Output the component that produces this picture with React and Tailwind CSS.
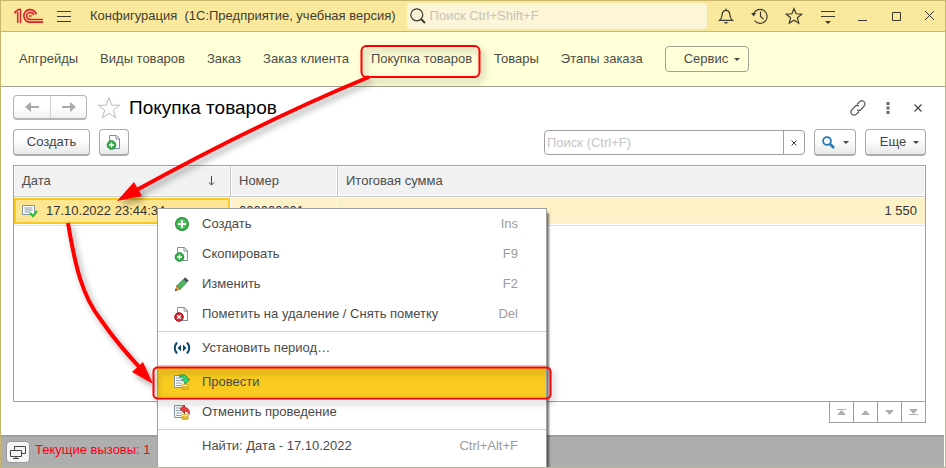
import React from "react";

const navItems = ["Апгрейды", "Виды товаров", "Заказ", "Заказ клиента", "Покупка товаров", "Товары", "Этапы заказа"];

function Caret() {
  return (
    <svg width="6" height="3" viewBox="0 0 6 3" className="shrink-0" aria-hidden="true">
      <path d="M0 0h6L3 3z" fill="#444" />
    </svg>
  );
}

function Logo() {
  return (
    <svg width="30" height="16" viewBox="0 0 30 16" fill="none" stroke="#d9232a" className="shrink-0" aria-label="1С">
      <path d="M0 4.500h2.500M3.700 15V4M1 3.800L4.500 1.600h2V15" strokeWidth="1.500" />
      <path d="M22.300 6.500A6.300 6.300 0 1 0 16.200 14.200H29" strokeWidth="1.700" />
      <path d="M19.600 7.200A3.500 3.500 0 1 0 16.200 11.400H29" strokeWidth="1.500" />
      <circle cx="16.300" cy="7.900" r="1" strokeWidth="1" />
    </svg>
  );
}

function DocPlus() {
  return (
    <svg width="16" height="16" viewBox="0 0 16 16" fill="none" aria-hidden="true">
      <path d="M3.500 1.500h7l3 3v10h-10z" fill="#fff" stroke="#7c8ea3" />
      <path d="M10 1.500v3.500h3.500" stroke="#7c8ea3" />
      <circle cx="5.500" cy="11" r="4.300" fill="#35ab48" stroke="#1f8a34" />
      <path d="M5.500 8.500v5M3 11h5" stroke="#fff" strokeWidth="1.400" />
    </svg>
  );
}

function DocDelete() {
  return (
    <svg width="16" height="16" viewBox="0 0 16 16" fill="none" aria-hidden="true">
      <path d="M3.500 1.500h7l3 3v10h-10z" fill="#fff" stroke="#7c8ea3" />
      <path d="M10 1.500v3.500h3.500" stroke="#7c8ea3" />
      <circle cx="5" cy="11" r="4.300" fill="#d3262c" stroke="#a9151c" />
      <path d="M3.200 9.200l3.600 3.600M6.800 9.200l-3.600 3.600" stroke="#fff" strokeWidth="1.400" />
    </svg>
  );
}

function PlusCircle() {
  return (
    <svg width="16" height="16" viewBox="0 0 16 16" aria-hidden="true">
      <circle cx="8" cy="8" r="6.400" fill="#48bb55" stroke="#249038" strokeWidth="1.200" />
      <path d="M8 4v8M4 8h8" stroke="#fff" strokeWidth="2" />
    </svg>
  );
}

function Pencil() {
  return (
    <svg width="16" height="16" viewBox="0 0 16 16" aria-hidden="true">
      <path d="M1.200 14.800l1.600-5 3.400 3.400z" fill="#e8a552" stroke="#8c5a20" strokeWidth=".6" />
      <path d="M1.200 14.800l.6-2 1.400 1.400z" fill="#4a2c12" />
      <path d="M2.800 9.800l6.400-6.400 3.400 3.400-6.400 6.400z" fill="#4fb45e" stroke="#26803a" strokeWidth=".7" />
      <path d="M9.400 3.200l1.900-1.900 3.400 3.400-1.900 1.900z" fill="#3c4d61" />
    </svg>
  );
}

function Period() {
  return (
    <svg width="18" height="16" viewBox="0 0 18 16" fill="none" aria-hidden="true">
      <path d="M4 2.500Q-.5 8 4 13.500M14 2.500Q18.500 8 14 13.500" stroke="#124a6e" strokeWidth="2" />
      <path d="M8 4.500v7L4.500 8zM10 4.500v7L13.500 8z" fill="#124a6e" />
    </svg>
  );
}

function PostIcon({ undo = false }) {
  return (
    <svg width="18" height="18" viewBox="0 0 18 18" aria-hidden="true">
      <path d="M1.500 2.500h10v12h-10z" fill="#f6f8fa" stroke="#8293a5" />
      <path d="M3 5h6M3 7.500h6M3 10h6M3 12.500h5" stroke="#94a2b2" />
      <ellipse cx="12" cy="15" rx="3.500" ry="1.600" fill="#f2c72e" stroke="#b98c13" strokeWidth=".7" />
      <ellipse cx="12" cy="12.600" rx="3.500" ry="1.600" fill="#ffe56a" stroke="#b98c13" strokeWidth=".7" />
      {undo ? (
        <path d="M7 6l4.500-4v2.500c4 0 5.500 3 4.700 7-1-2.500-2.300-3.400-4.700-3.300v2.300z" fill="#ea4040" stroke="#a81f22" strokeWidth=".7" />
      ) : (
        <path d="M6.500 2.200c5-1.300 8 .5 8.200 4H17l-4.200 4.500L8.500 6.300h2.600c0-1.900-1.500-2.800-4.600-2.200z" fill="#2fd873" stroke="#128a43" strokeWidth=".7" />
      )}
    </svg>
  );
}

function TitleBarButton({ label, children, last = false }) {
  return (
    <button type="button" aria-label={label} className={`flex h-full items-center justify-center ${last ? "w-8" : "w-[34px]"}`}>
      <svg width="18" height="18" viewBox="0 0 18 18" fill="none" stroke="#3b3a30" strokeWidth="1.200" aria-hidden="true">
        {children}
      </svg>
    </button>
  );
}

function TitleBar() {
  return (
    <header className="flex h-[31px] shrink-0 items-center border-b border-[#c8b66c] bg-[#fae99c]">
      <div className="flex shrink-0 items-center gap-3 pl-[13px]">
        <Logo />
        <button type="button" aria-label="Главное меню" className="flex w-4 flex-col gap-1 px-px">
          <span className="h-px w-full bg-[#3b3a30]" />
          <span className="h-px w-full bg-[#3b3a30]" />
          <span className="h-px w-full bg-[#3b3a30]" />
        </button>
      </div>
      <h1 className="ml-[18px] shrink-0 whitespace-pre text-[13px] text-[#3f3d33]">Конфигурация  (1С:Предприятие, учебная версия)</h1>
      <label className="ml-[11px] flex h-[26px] min-w-0 flex-1 items-center gap-1 rounded-sm bg-[#fcf5d8] pl-[3px]">
        <svg width="16" height="16" viewBox="0 0 16 16" fill="none" stroke="#3b3a30" aria-hidden="true">
          <circle cx="6.800" cy="6.800" r="6" strokeWidth="1.200" />
          <path d="M11 11l4 4" strokeWidth="2" />
        </svg>
        <input aria-label="Поиск" placeholder="Поиск Ctrl+Shift+F" className="min-w-0 flex-1 bg-transparent text-[13px] outline-none placeholder:text-[#c6c3b8]" />
      </label>
      <div className="ml-0.5 flex h-full shrink-0">
        <TitleBarButton label="Уведомления">
          <path d="M9 1.500v1.500M2.500 13.400h13c-2.500-2-2.500-3.400-2.700-6C12.600 4.600 11 3.300 9 3.300S5.400 4.600 5.200 7.400c-.2 2.600-.2 4-2.700 6z" />
          <path d="M7 15h4l-1 1.500H8z" fill="#3b3a30" stroke="none" />
        </TitleBarButton>
        <TitleBarButton label="История">
          <path d="M2.700 6.500A7 7 0 1 1 3.500 13.500M9.500 4.500v5l3 2.500" />
          <path d="M.2 6h5L2.500 9.500z" fill="#3b3a30" stroke="none" />
        </TitleBarButton>
        <TitleBarButton label="Избранное">
          <path d="M9 1.600l2.100 5.200 5.600.4-4.300 3.600 1.400 5.500L9 13.300l-4.800 3 1.400-5.500-4.300-3.600 5.600-.4z" />
        </TitleBarButton>
        <TitleBarButton label="Настройки">
          <path d="M2 4.500h14M2 9.500h14" />
          <path d="M6 14h6l-3 3z" fill="#3b3a30" stroke="none" />
        </TitleBarButton>
        <TitleBarButton label="Свернуть">
          <path d="M5 13.500h9" strokeWidth="1" />
        </TitleBarButton>
        <TitleBarButton label="Развернуть">
          <path d="M5.500 5.500h8v8h-8z" strokeWidth="1" />
        </TitleBarButton>
        <TitleBarButton label="Закрыть" last>
          <path d="M5 4l9 9M14 4l-9 9" strokeWidth="1" />
        </TitleBarButton>
      </div>
    </header>
  );
}

function SectionNav() {
  return (
    <nav className="flex h-[55px] shrink-0 items-center gap-[22px] border-b border-[#a3a38f] bg-[#ffffd8] pl-[18px] text-[13px] text-[#4d4d48]">
      {navItems.map((item) => (
        <a key={item} href="#" className="whitespace-nowrap">{item}</a>
      ))}
      <button type="button" className="flex h-[26px] items-center gap-1.5 rounded border border-[#a3a38f] pr-2 pl-[18px]">
        Сервис
        <Caret />
      </button>
    </nav>
  );
}

const raised = "flex h-[27px] items-center justify-center rounded-sm border border-b-2 border-[#aaa] bg-linear-to-b from-white from-40% to-[#e8e8e8]";

function FormHeader() {
  return (
    <div className="flex h-[25px] items-center">
      <div className="flex h-[25px] rounded-sm border border-b-2 border-[#b4b4b4] bg-linear-to-b from-white from-50% to-[#f0f0f0]">
        <button type="button" aria-label="Назад" className="flex w-9 items-center justify-center">
          <svg width="14" height="10" viewBox="0 0 14 10" aria-hidden="true"><path d="M0 5l6-5v4h8v2H6v4z" fill="#aaa" /></svg>
        </button>
        <button type="button" aria-label="Вперед" className="flex w-9 items-center justify-center border-l border-[#d2d2d2]">
          <svg width="14" height="10" viewBox="0 0 14 10" aria-hidden="true"><path d="M14 5L8 0v4H0v2h8v4z" fill="#aaa" /></svg>
        </button>
      </div>
      <button type="button" aria-label="Добавить в избранное" className="ml-2.5">
        <svg width="24" height="24" viewBox="0 0 24 24" fill="none" stroke="#b5bbc1" aria-hidden="true">
          <path d="M12 1.500l2.700 7.700h8l-6.400 4.900 2.400 7.800L12 17.200l-6.700 4.700 2.400-7.800L1.300 9.200h8z" />
        </svg>
      </button>
      <h2 className="ml-2 text-[19px] leading-6 text-black">Покупка товаров</h2>
      <div className="ml-auto flex items-center gap-2.5">
        <button type="button" aria-label="Ссылка">
          <svg width="16" height="16" viewBox="0 0 16 16" fill="none" stroke="#555" strokeWidth="1.200" aria-hidden="true">
            <path d="M7 4.500l2.500-2.700a3 3 0 0 1 4.600 4.300L11 9.500c-1.200 1.200-2.700 1.200-3.800.4" />
            <path d="M9 11.500l-2.500 2.700A3 3 0 0 1 1.900 9.900L5 6.500c1.200-1.200 2.700-1.200 3.800-.4" />
          </svg>
        </button>
        <button type="button" aria-label="Меню формы" className="flex w-6 justify-center">
          <svg width="4" height="12" viewBox="0 0 4 12" fill="#666" aria-hidden="true"><path d="M.5 0h3v3h-3zM.5 4.500h3v3h-3zM.5 9h3v3h-3z" /></svg>
        </button>
        <button type="button" aria-label="Закрыть форму" className="flex w-4 justify-center">
          <svg width="8" height="8" viewBox="0 0 8 8" stroke="#444" strokeWidth="1.200" aria-hidden="true"><path d="M.5.5l7 7M7.500.5l-7 7" /></svg>
        </button>
      </div>
    </div>
  );
}

function Toolbar() {
  return (
    <div className="mt-[9px] flex items-center text-[13px] text-[#444]">
      <button type="button" className={`${raised} w-[77px]`}>Создать</button>
      <button type="button" aria-label="Создать копированием" className={`${raised} ml-[9px] w-[30px]`}><DocPlus /></button>
      <div className="ml-auto flex h-[25px] w-[261px] rounded-sm border border-[#a0a0a0] bg-white">
        <input aria-label="Поиск по списку" placeholder="Поиск (Ctrl+F)" className="min-w-0 flex-1 px-0.5 outline-none placeholder:text-[#c4c4c4]" />
        <button type="button" aria-label="Очистить" className="flex w-[21px] items-center justify-center border-l border-[#a0a0a0]">
          <svg width="6" height="6" viewBox="0 0 6 6" stroke="#444" aria-hidden="true"><path d="M.5.5l5 5M5.500.5l-5 5" /></svg>
        </button>
      </div>
      <button type="button" aria-label="Найти" className={`${raised} ml-[9px] w-[42px] gap-2`}>
        <svg width="13" height="13" viewBox="0 0 13 13" fill="none" stroke="#2678b2" aria-hidden="true">
          <circle cx="5" cy="5" r="3.900" strokeWidth="1.800" />
          <path d="M8 8l4 4" strokeWidth="2.600" />
        </svg>
        <Caret />
      </button>
      <button type="button" className={`${raised} ml-[9px] w-[61px] gap-[7px] pl-2`}>Еще<Caret /></button>
    </div>
  );
}

function List() {
  return (
    <div className="mt-[9px] flex-1 border border-[#a0a0a0] bg-white">
      <table className="w-full table-fixed border-separate border-spacing-0 text-left text-[13px]">
        <colgroup>
          <col className="w-[217px]" />
          <col className="w-[107px]" />
          <col />
        </colgroup>
        <thead className="text-[#4d4d4d]">
          <tr>
            <th className="border-r border-b border-[#c6c6c6] p-px font-normal">
              <div className="flex h-7 items-center justify-between bg-[#f1f1f1] pr-3.5 pl-[7px]">
                Дата
                <svg width="7" height="10" viewBox="0 0 7 10" fill="none" stroke="#444" aria-hidden="true"><path d="M3.500 0v9M1 6.500l2.500 2.500L6 6.500" /></svg>
              </div>
            </th>
            <th className="border-r border-b border-[#c6c6c6] p-px font-normal">
              <div className="flex h-7 items-center bg-[#f1f1f1] pl-[7px]">Номер</div>
            </th>
            <th className="border-b border-[#c6c6c6] p-px font-normal">
              <div className="flex h-7 items-center bg-[#f1f1f1] pl-[7px]">Итоговая сумма</div>
            </th>
          </tr>
        </thead>
        <tbody className="text-[#333]">
          <tr>
            <td className="border-b border-[#e0e0e0] py-px pr-px">
              <div className="flex h-[26px] items-center gap-2 border-2 border-[#f9c922] bg-[#fde591] pl-1.5">
                <svg width="16" height="14" viewBox="0 0 16 14" fill="none" aria-hidden="true">
                  <path d="M.5 1.500h12v9H.5z" fill="#fff" stroke="#8293a5" />
                  <path d="M2.500 4h8M2.500 6h8M2.500 8h6" stroke="#8293a5" />
                  <path d="M8 9l3 3 4-5" stroke="#2fbb3c" strokeWidth="2.200" />
                </svg>
                <span className="whitespace-nowrap">17.10.2022 23:44:34</span>
              </div>
            </td>
            <td className="border-b border-[#e0e0e0] py-px pr-px">
              <div className="flex h-[26px] items-center bg-[#fdf1c7] pl-2">000000001</div>
            </td>
            <td className="border-b border-[#e0e0e0] py-px">
              <div className="flex h-[26px] items-center justify-end bg-[#fdf1c7] pr-2">1 550</div>
            </td>
          </tr>
        </tbody>
      </table>
    </div>
  );
}

const pagerIcons = [
  ["В начало", "M0 0h9v1H0zM4.500 1L9 6H0z"],
  ["Вверх", "M4.500 1L9 6H0z"],
  ["Вниз", "M0 1h9L4.500 6z"],
  ["В конец", "M0 0h9L4.500 5zM0 5h9v1H0z"],
];

function Pager() {
  return (
    <div className="mb-3 flex justify-end">
      <div className="flex h-[21px] divide-x divide-[#a0a0a0] border border-t-0 border-[#a0a0a0]">
        {pagerIcons.map(([label, d]) => (
          <button key={label} type="button" aria-label={label} className="box-content flex w-[23px] items-center justify-center">
            <svg width="9" height="6" viewBox="0 0 9 6" fill="#adadad" aria-hidden="true"><path d={d} /></svg>
          </button>
        ))}
      </div>
    </div>
  );
}

function StatusBar() {
  return (
    <footer className="mr-px flex h-8 shrink-0 items-center gap-[5px] border-t-2 border-[#9d9d9d] bg-[#aeaeae] pl-[5px] text-[13px] text-[#ff0014]">
      <button type="button" aria-label="Окна" className="flex h-[22px] w-6 items-center justify-center rounded-sm border border-[#999] bg-[#f5f5f5]">
        <svg width="18" height="15" viewBox="0 0 18 15" fill="#f5f5f5" stroke="#444" aria-hidden="true">
          <path d="M5.500 1.500h11v7h-11z" />
          <path d="M1.500 5.500h11v6h-11zM7 11.500v2M4 13.500h6" />
        </svg>
      </button>
      <span className="mb-1">Текущие вызовы: 1</span>
    </footer>
  );
}

function MenuItem({ icon, label, shortcut, active = false }) {
  return (
    <button type="button" role="menuitem" className={`flex h-[30px] w-full items-center pr-7 text-left ${active ? "bg-[#f9cb20]" : ""}`}>
      <span className="flex w-11 shrink-0 items-center justify-center pl-1">{icon}</span>
      <span className="flex-1">{label}</span>
      <span className="text-[#9c9c9c]">{shortcut}</span>
    </button>
  );
}

function Separator() {
  return <div role="separator" className="my-px h-0.5 border-b border-[#d0cfc8]" />;
}

function ContextMenu() {
  return (
    <div role="menu" className="absolute top-[207px] left-[156px] w-[390px] border border-[#a0a0a0] bg-white pb-10 text-[13px] text-[#4a4a4a] shadow-[2px_5px_2px_#00000088]">
      <MenuItem icon={<PlusCircle />} label="Создать" shortcut="Ins" />
      <MenuItem icon={<DocPlus />} label="Скопировать" shortcut="F9" />
      <MenuItem icon={<Pencil />} label="Изменить" shortcut="F2" />
      <MenuItem icon={<DocDelete />} label="Пометить на удаление / Снять пометку" shortcut="Del" />
      <Separator />
      <MenuItem icon={<Period />} label="Установить период…" />
      <Separator />
      <MenuItem icon={<PostIcon />} label="Провести" active />
      <MenuItem icon={<PostIcon undo />} label="Отменить проведение" />
      <Separator />
      <MenuItem label="Найти: Дата - 17.10.2022" shortcut="Ctrl+Alt+F" />
    </div>
  );
}

function Annotations() {
  return (
    <svg width="946" height="468" viewBox="1 1 946 468" fill="none" className="pointer-events-none absolute top-0 left-0" aria-hidden="true">
      <defs>
        <filter id="soft" x="-20%" y="-20%" width="140%" height="150%">
          <feDropShadow dx="3" dy="4" stdDeviation="3" floodColor="#000" floodOpacity=".35" />
        </filter>
      </defs>
      <g filter="url(#soft)" stroke="#fe0000">
        <rect x="361.500" y="46" width="118" height="31" rx="5" strokeWidth="2" />
        <rect x="153.500" y="367.500" width="397" height="31" rx="4" strokeWidth="2" />
        <path d="M369 77Q260 122 133 192" strokeWidth="4" />
        <path d="M117 201l17-19 8 14z" fill="#fe0000" stroke="none" />
        <path d="M68 223C75 265 82 296 101 320Q116 342 141 369" strokeWidth="4" />
        <path d="M153 384l-21-12 11-10z" fill="#fe0000" stroke="none" />
      </g>
    </svg>
  );
}

export default function App() {
  return (
    <div className="relative flex h-screen flex-col overflow-hidden border border-[#c8b66c] bg-white font-['Liberation_Sans',Arial,sans-serif]">
      <TitleBar />
      <SectionNav />
      <main className="flex min-h-0 flex-1 flex-col pt-2 pr-[19px] pl-3">
        <FormHeader />
        <Toolbar />
        <List />
        <Pager />
      </main>
      <StatusBar />
      <ContextMenu />
      <Annotations />
    </div>
  );
}
